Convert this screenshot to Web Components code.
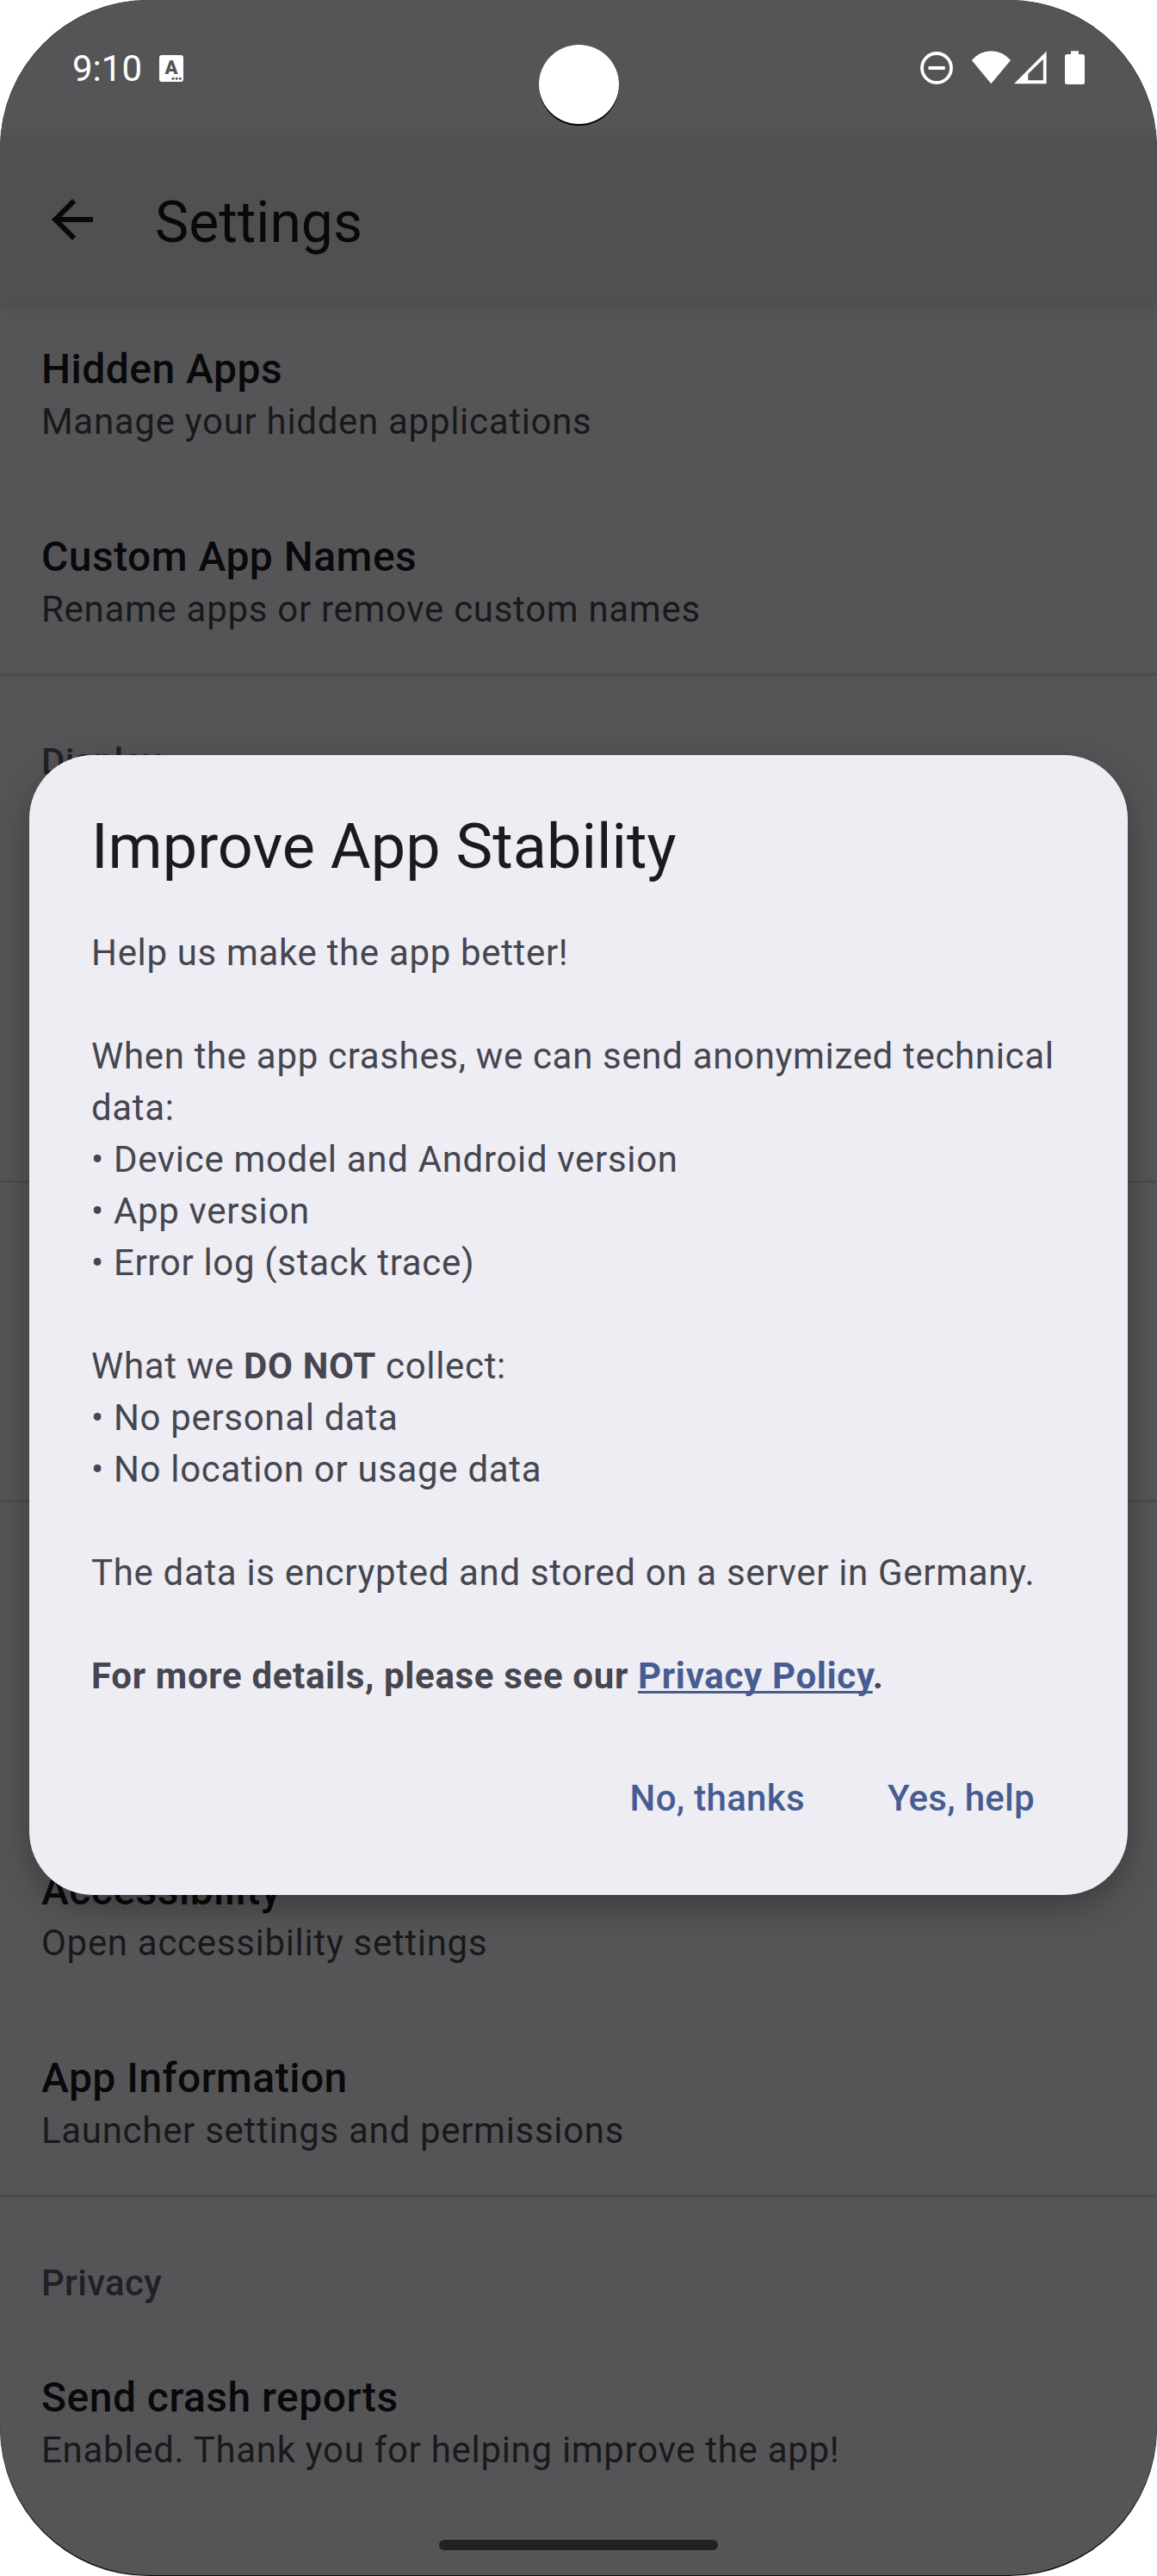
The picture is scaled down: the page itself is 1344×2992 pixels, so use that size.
<!DOCTYPE html>
<html lang="en">
<head>
<meta charset="utf-8">
<title>Settings</title>
<style>
html, body { margin: 0; background: #fff; }
body { font-family: Roboto, "Liberation Sans", sans-serif; }
</style>
</head>
<body>
<phone-screen>
  <status-bar slot="status" time="9:10"></status-bar>
  <app-bar>Settings</app-bar>
  <settings-section first>
    <setting-item label="Hidden Apps">Manage your hidden applications</setting-item>
    <setting-item label="Custom App Names">Rename apps or remove custom names</setting-item>
  </settings-section>
  <settings-section label="Display">
    <setting-item></setting-item>
    <setting-item></setting-item>
  </settings-section>
  <settings-section>
    <setting-item></setting-item>
  </settings-section>
  <settings-section>
    <setting-item></setting-item>
    <setting-item label="Accessibility">Open accessibility settings</setting-item>
    <setting-item label="App Information">Launcher settings and permissions</setting-item>
  </settings-section>
  <settings-section label="Privacy">
    <setting-item label="Send crash reports">Enabled. Thank you for helping improve the app!</setting-item>
  </settings-section>
  <alert-dialog slot="overlay" heading="Improve App Stability">
    <dialog-text>Help us make the app better!</dialog-text>
    <dialog-text>When the app crashes, we can send anonymized technical data:<br>• Device model and Android version<br>• App version<br>• Error log (stack trace)</dialog-text>
    <dialog-text>What we <b>DO NOT</b> collect:<br>• No personal data<br>• No location or usage data</dialog-text>
    <dialog-text>The data is encrypted and stored on a server in Germany.</dialog-text>
    <dialog-text><b>For more details, please see our <text-link>Privacy Policy</text-link>.</b></dialog-text>
    <text-button slot="actions">No, thanks</text-button>
    <text-button slot="actions">Yes, help</text-button>
  </alert-dialog>
</phone-screen>
<script>
function define(name, render) {
  customElements.define(name, class extends HTMLElement {
    constructor() {
      super();
      this.attachShadow({ mode: 'open' }).innerHTML = render(this);
    }
  });
}

define('phone-screen', () => `
<style>
:host { display: block; position: relative; width: 1344px; height: 2992px; background: #0c0b0d; border-radius: 172px; overflow: hidden; }
.screen { height: 2991px; background: #555557; border-radius: 173px; overflow: hidden; display: flex; flex-direction: column; }
.overlay { position: absolute; inset: 0; display: flex; justify-content: center; align-items: flex-start; padding-top: 877px; }
.camera { position: absolute; left: 626px; top: 53px; width: 93px; height: 93px; border-radius: 50%; background: #000; }
.camera::after { content: ""; display: block; width: 93px; height: 92px; border-radius: 50%; background: #fff; margin-top: -1px; }
.pill { position: absolute; left: 510px; top: 2950px; width: 324px; height: 12px; border-radius: 6px; background: #222; }
</style>
<div class="screen"><slot name="status"></slot><slot></slot></div>
<div class="overlay"><slot name="overlay"></slot></div>
<div class="camera"></div><div class="pill"></div>`);

define('status-bar', el => `
<style>
:host { display: flex; flex: none; box-sizing: border-box; height: 158px; padding: 0 84px 0 84px; align-items: flex-start; justify-content: space-between; color: #fff; }
.left { display: flex; }
.time { width: 82px; font-size: 42px; line-height: 60px; margin-top: 50px; }
.kb { position: relative; width: 28px; height: 31px; margin: 64px 0 0 19px; border-radius: 3px; background: #fff; color: #555557; font-weight: 900; font-size: 22px; line-height: 29px; text-align: center; }
.kb svg { position: absolute; left: 0; top: 0; }
.right { width: 191px; height: 40px; margin-top: 59px; }
svg { display: block; }
</style>
<div class="left"><div class="time">${el.getAttribute('time')}</div>
<div class="kb">A<svg width="28" height="31" fill="#555557"><circle cx="16" cy="27.3" r="1.5"/><circle cx="20.2" cy="27.3" r="1.5"/><circle cx="24.4" cy="27.3" r="1.5"/></svg></div></div>
<svg class="right" viewBox="1069 59 191 40" fill="#fff">
<circle cx="1088" cy="79" r="17" fill="none" stroke="#fff" stroke-width="3.8"/><rect x="1078.5" y="77" width="19.2" height="4"/>
<path d="M1151.3 97.2 1128.8 70Q1138 59.3 1151.3 59.3T1174 70Z"/>
<path fill-rule="evenodd" d="M1178 97.3 1215.6 59.4V97.3ZM1194.3 85.8V93.3H1211.8V68.8Z"/>
<path d="M1244 59.3h9v3.700h4.500a2.500 2.500 0 0 1 2.500 2.500v30a2.500 2.500 0 0 1-2.500 2.500h-18a2.500 2.500 0 0 1-2.500-2.500v-30a2.500 2.500 0 0 1 2.500-2.500h4.500z"/>
</svg>`);

define('app-bar', () => `
<style>
:host { display: flex; flex: none; position: relative; z-index: 1; box-sizing: border-box; height: 193px; padding-left: 48px; align-items: center; gap: 60px; background: #505052; color: #09090b; box-shadow: 0 5px 14px rgba(0,0,0,.13); font-size: 66px; line-height: 84px; }
svg { display: block; }
span { margin-top: 8px; }
</style>
<svg width="72" height="72" viewBox="0 0 24 24" fill="#09090b"><path d="M20 11H7.830l5.590-5.590L12 4l-8 8 8 8 1.410-1.410L7.830 13H20z"/></svg>
<span><slot></slot></span>`);

define('settings-section', el => `
<style>
:host { display: block; flex: none; border-top: 3px solid #4b4b4d; }
:host([first]) { border: 0; margin-top: -5px; }
.head { box-sizing: border-box; height: 150px; padding: 70px 48px 0; font-size: 42px; font-weight: 500; line-height: 60px; letter-spacing: .3px; color: #202027; }
</style>
${el.hasAttribute('first') ? '' : `<div class="head">${el.getAttribute('label') || ''}</div>`}<slot></slot>`);

define('setting-item', el => `
<style>
:host { display: block; box-sizing: border-box; height: 218px; padding: 52px 48px 0; }
.t { font-size: 48px; font-weight: 500; line-height: 62px; height: 62px; letter-spacing: .48px; color: #09090b; }
.s { font-size: 42px; line-height: 60px; letter-spacing: .7px; color: #19191b; }
</style>
<div class="t">${el.getAttribute('label') || ''}</div><div class="s"><slot></slot></div>`);

define('alert-dialog', el => `
<style>
:host { display: flex; flex-direction: column; box-sizing: border-box; width: 1276px; height: 1324px; padding: 59px 72px 0; border-radius: 74px; background: #eeedf4; box-shadow: 0 14px 38px rgba(0,0,0,.3); }
h2 { margin: 0 0 45px; font-size: 72px; font-weight: 400; line-height: 96px; color: #1a1b20; }
.body { display: flex; flex-direction: column; gap: 60px; }
.actions { display: flex; justify-content: flex-end; gap: 96px; margin: 82px 36px 0 0; }
</style>
<h2>${el.getAttribute('heading')}</h2>
<div class="body"><slot></slot></div>
<div class="actions"><slot name="actions"></slot></div>`);

define('dialog-text', () => `
<style>:host { display: block; font-size: 42px; line-height: 60px; letter-spacing: .67px; color: #45464f; }</style><slot></slot>`);

define('text-link', () => `
<style>:host { color: #475d92; text-decoration: underline; text-decoration-thickness: 2.5px; text-underline-offset: 3px; text-decoration-skip-ink: none; }</style><slot></slot>`);

define('text-button', () => `
<style>:host { display: block; font-size: 42px; font-weight: 500; line-height: 60px; letter-spacing: .3px; color: #475d92; }</style><slot></slot>`);
</script>
</body>
</html>
